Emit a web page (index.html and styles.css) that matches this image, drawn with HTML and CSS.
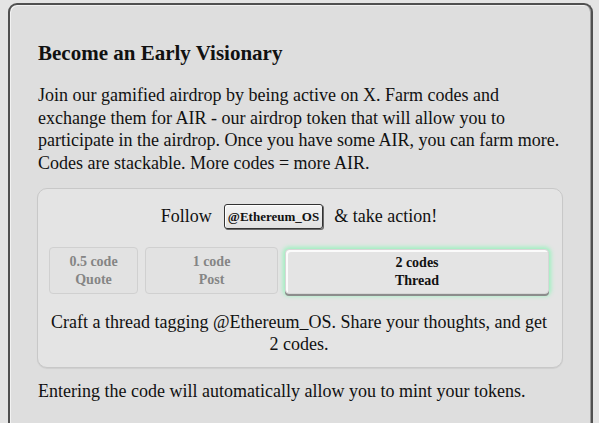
FILE: index.html
```html
<!DOCTYPE html>
<html>
<head>
<meta charset="utf-8">
<link rel="stylesheet" href="styles.css">
</head>
<body>
<div class="card">
  <h2 class="title">Become an Early Visionary</h2>
  <p class="intro">Join our gamified airdrop by being active on X. Farm codes and exchange them for AIR - our airdrop token that will allow you to participate in the airdrop. Once you have some AIR, you can farm more. Codes are stackable. More codes = more AIR.</p>
  <div class="panel">
    <div class="follow">
      <span>Follow</span>
      <button class="handle">@Ethereum_OS</button>
      <span>&amp; take action!</span>
    </div>
    <div class="tabs">
      <button class="tab tab-quote"><span>0.5 code</span><span>Quote</span></button>
      <button class="tab tab-post"><span>1 code</span><span>Post</span></button>
      <button class="tab tab-thread active"><span>2 codes</span><span>Thread</span></button>
    </div>
    <p class="desc">Craft a thread tagging @Ethereum_OS. Share your thoughts, and get 2 codes.</p>
  </div>
  <p class="outro">Entering the code will automatically allow you to mint your tokens.</p>
</div>
</body>
</html>
```
FILE: styles.css
```css
html, body {
  margin: 0;
  padding: 0;
  background: #e4e4e4;
}
body {
  padding: 3px 6px 0 8px;
  font-family: "Liberation Serif", serif;
  color: #111;
}
.card {
  background: #dedede;
  border: 2px solid #505050;
  border-bottom: none;
  border-radius: 9px 9px 0 0;
  box-shadow: inset 1px 1px 0 #f2f2f2, inset -1px 0 0 #9a9a9a;
  padding: 36px 28px 0 27px;
  height: 420px;
  box-sizing: border-box;
}
.title {
  margin: 0 0 19px 1px;
  font-size: 21px;
  font-weight: bold;
  line-height: 24px;
}
.intro {
  margin: 0 0 14px 1px;
  font-size: 18px;
  line-height: 22.5px;
}
.panel {
  background: #e4e4e4;
  border: 1px solid #c8c8c8;
  border-radius: 10px;
  box-shadow: 0 1px 1px rgba(0,0,0,0.07);
  padding: 15px 13px 12px 11px;
}
.follow {
  display: flex;
  justify-content: center;
  align-items: center;
  gap: 11px;
  font-size: 18px;
  height: 25px;
}
.handle {
  font-family: "Liberation Serif", serif;
  font-weight: bold;
  font-size: 13px;
  color: #111;
  background: linear-gradient(#f4f4f4, #e0e0e0);
  border: 1px solid #333;
  border-radius: 3px;
  box-shadow: 1px 1px 0 #6a6a6a, inset 1px 1px 0 #fff;
  padding: 0 3px;
  height: 25px;
  margin-left: 1px;
}
.tabs {
  display: flex;
  gap: 7px;
  margin-top: 18px;
}
.tab {
  display: flex;
  flex-direction: column;
  align-items: center;
  justify-content: center;
  font-family: "Liberation Serif", serif;
  font-weight: bold;
  font-size: 14px;
  line-height: 18px;
  color: #858585;
  background: #e2e2e2;
  border: 1px solid #d0d0d0;
  border-radius: 4px;
  height: 47px;
  padding: 0;
}
.tab-quote { width: 89px; }
.tab-post { width: 133px; }
.tab-thread { width: 264px; }
.tab.active {
  color: #111;
  background: #e4e4e4;
  border: 1px solid #d6d6d6;
  box-shadow: inset 2px 2px 0 #fbfbfb, 0 2px 0 #8c8c8c, 0 0 4px 2px #9cf2bf;
  height: 45px;
  margin-top: 2px;
}
.desc {
  margin: 17px 0 0;
  text-align: center;
  font-size: 18px;
  line-height: 22px;
}
.outro {
  margin: 13px 0 0 1px;
  font-size: 18px;
  line-height: 21px;
}
```
